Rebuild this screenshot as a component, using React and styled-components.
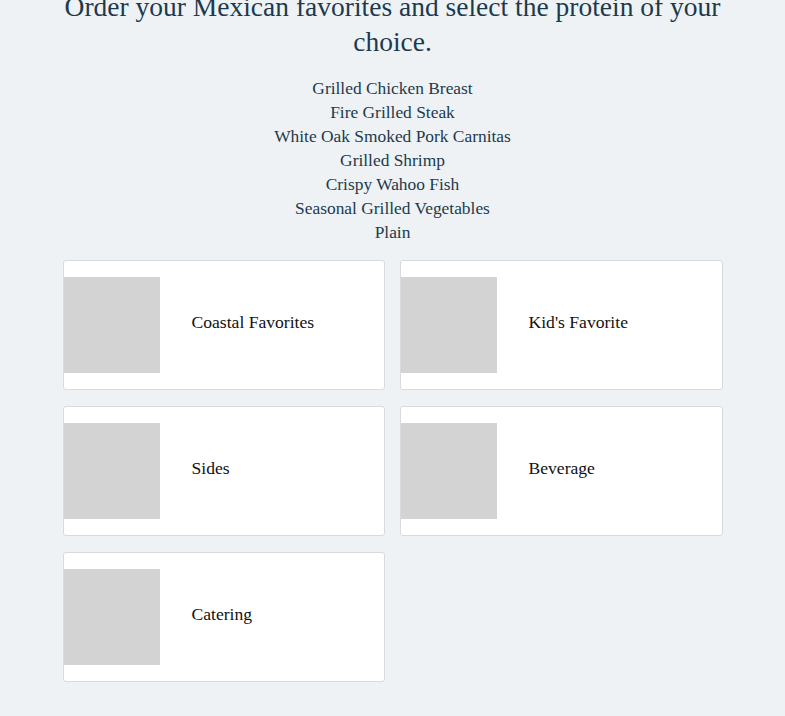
import styled, { createGlobalStyle } from "styled-components";

const Global = createGlobalStyle`
  html, body {
    margin: 0;
    padding: 0;
    background: #eef2f5;
  }
  body {
    font-family: "Liberation Serif", serif;
  }
`;

const Page = styled.div`
  width: 660px;
  margin: -11px auto 0;
  padding-bottom: 34px;
`;

const Title = styled.h2`
  margin: 0;
  font-family: "Liberation Serif", serif;
  font-weight: 400;
  font-size: 27.5px;
  line-height: 35px;
  color: #1d3a4d;
  text-align: center;
`;

const Proteins = styled.ul`
  list-style: none;
  margin: 17px 0 16px;
  padding: 0;
  text-align: center;
  font-family: "Liberation Serif", serif;
  font-size: 17.4px;
  line-height: 24px;
  color: #1d3a4d;
`;

const Grid = styled.div`
  display: grid;
  grid-template-columns: 322px 323px;
  column-gap: 15px;
  row-gap: 16px;
`;

const Card = styled.a`
  display: flex;
  align-items: center;
  height: 130px;
  box-sizing: border-box;
  padding: 16px 0;
  background: #fff;
  border: 1px solid #d6dbe0;
  border-radius: 3px;
  text-decoration: none;
`;

const Thumb = styled.div`
  width: 96px;
  height: 96px;
  flex: none;
  background: #d3d3d3;
`;

const CardLabel = styled.span`
  margin: 0 0 6px 32px;
  font-family: "Liberation Serif", serif;
  font-size: 17.6px;
  color: #111;
`;

const proteins = [
  "Grilled Chicken Breast",
  "Fire Grilled Steak",
  "White Oak Smoked Pork Carnitas",
  "Grilled Shrimp",
  "Crispy Wahoo Fish",
  "Seasonal Grilled Vegetables",
  "Plain",
];

const categories = ["Coastal Favorites", "Kid's Favorite", "Sides", "Beverage", "Catering"];

export default function App() {
  return (
    <>
      <Global />
      <Page>
        <Title>Order your Mexican favorites and select the protein of your choice.</Title>
        <Proteins>
          {proteins.map((p) => (
            <li key={p}>{p}</li>
          ))}
        </Proteins>
        <Grid>
          {categories.map((c) => (
            <Card key={c}>
              <Thumb />
              <CardLabel>{c}</CardLabel>
            </Card>
          ))}
        </Grid>
      </Page>
    </>
  );
}
